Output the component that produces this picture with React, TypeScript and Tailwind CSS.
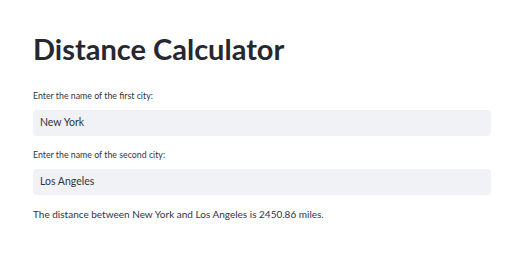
export default function App() {
    return (
        <div
            className="w-[520px] h-[272px] bg-white pl-[33px] pr-[29px] pt-[30px] text-[#31333F]"
            style={{ fontFamily: 'Lato, "Noto Sans", sans-serif' }}
        >
            <h1 className="text-[29px] leading-[38px] font-bold text-[#262730]">
                Distance Calculator
            </h1>
            <div className="mt-[22px] flex flex-col">
                <label className="text-[8.8px] leading-[12px]">
                    Enter the name of the first city:
                </label>
                <div className="mt-[8px] h-[26px] rounded-[4px] bg-[#F0F2F6] pl-[7px] flex items-center text-[10.5px]">
                    New York
                </div>
            </div>
            <div className="mt-[13px] flex flex-col">
                <label className="text-[8.8px] leading-[12px]">
                    Enter the name of the second city:
                </label>
                <div className="mt-[8px] h-[26px] rounded-[4px] bg-[#F0F2F6] pl-[7px] flex items-center text-[10.5px]">
                    Los Angeles
                </div>
            </div>
            <p className="mt-[12px] text-[10px] leading-[14px]">
                The distance between New York and Los Angeles is 2450.86 miles.
            </p>
        </div>
    )
}
